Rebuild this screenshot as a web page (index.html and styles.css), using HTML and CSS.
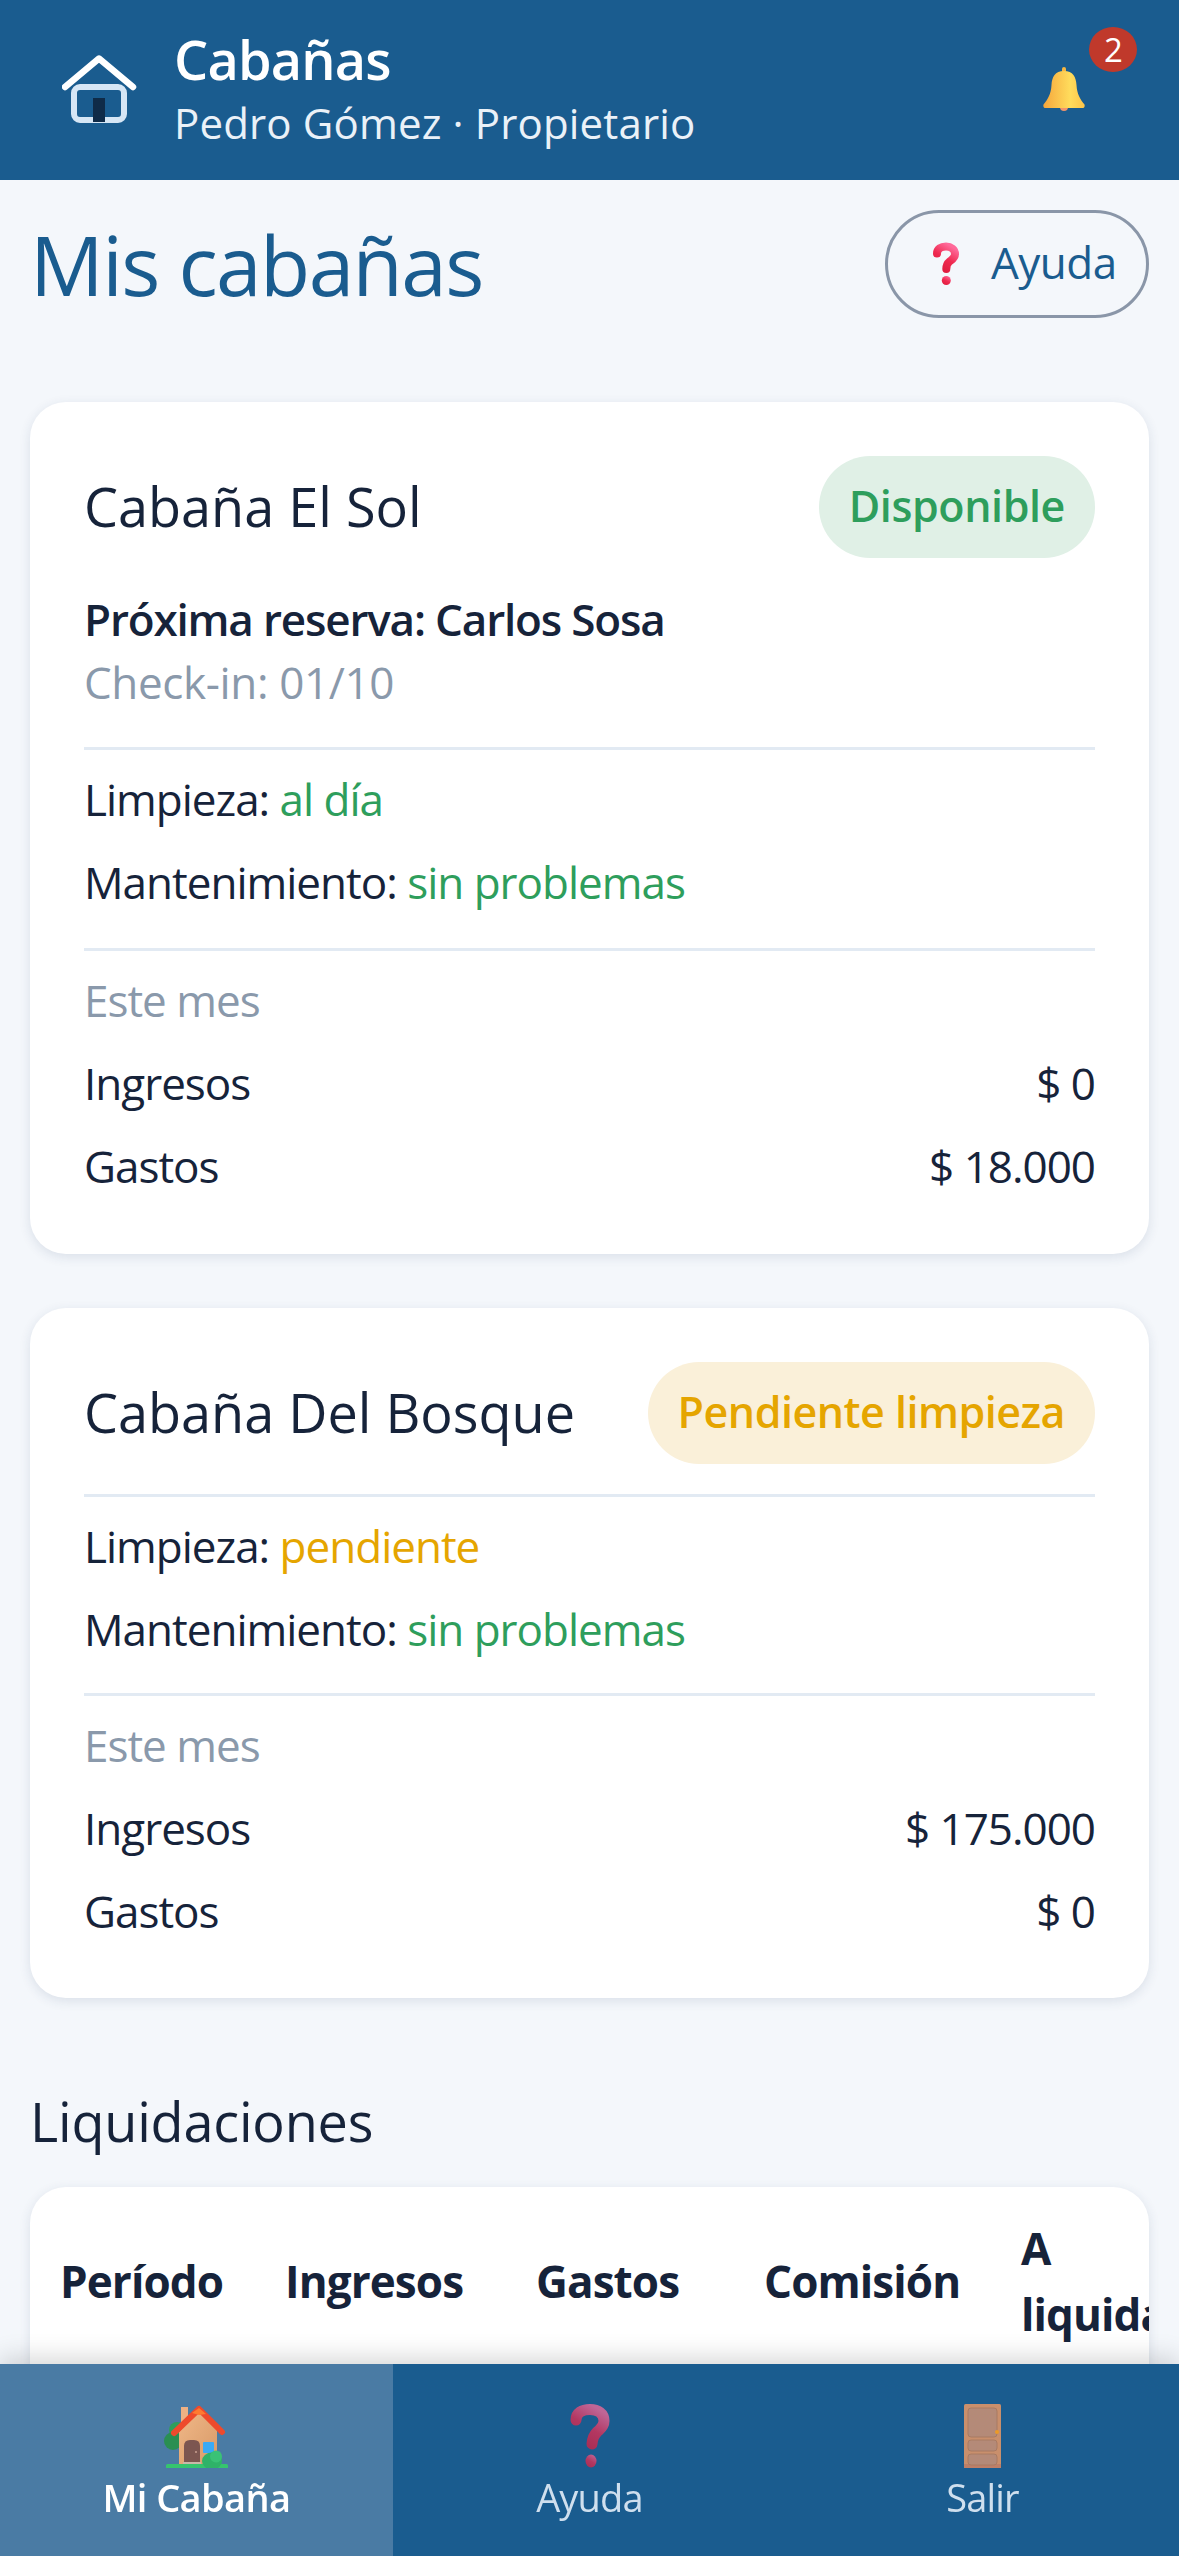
FILE: index.html
```html
<!DOCTYPE html>
<html lang="es">
<head>
<meta charset="utf-8">
<title>Cabañas</title>
<link rel="stylesheet" href="styles.css">
</head>
<body>
<svg class="defs" width="0" height="0" aria-hidden="true">
  <defs>
    <linearGradient id="q" x1="0.8" y1="0" x2="0.3" y2="1"><stop offset="0" stop-color="#ff6a9a"/><stop offset="0.55" stop-color="#ef2a50"/><stop offset="1" stop-color="#e01e40"/></linearGradient>
    <linearGradient id="b" x1="0" y1="0" x2="1" y2="0"><stop offset="0" stop-color="#f5a63c"/><stop offset="0.65" stop-color="#ffdc5c"/><stop offset="1" stop-color="#fcc44a"/></linearGradient>
    <linearGradient id="w" x1="0" y1="0" x2="1" y2="1"><stop offset="0" stop-color="#f0b888"/><stop offset="1" stop-color="#d89a68"/></linearGradient>
    <symbol id="question" viewBox="0 0 28 44">
      <path d="M5 11.5C5 7 9 4.500 14 4.500C19 4.500 23 7.500 23 12C23 16 20 17.500 17.500 19.500C15 21.500 14.300 23 14.300 27" fill="none" stroke="url(#q)" stroke-width="8" stroke-linecap="round" stroke-linejoin="round"/>
      <circle cx="14.300" cy="38.500" r="4.500" fill="url(#q)"/>
    </symbol>
  </defs>
</svg>

<header class="topbar">
  <div class="brand">
    <svg class="logo" viewBox="0 0 84 78" aria-hidden="true">
      <rect x="12" y="32" width="50" height="33" rx="6" fill="none" stroke="#d6e6f5" stroke-width="6"/>
      <rect x="31" y="43" width="12" height="24" fill="#0f2b48"/>
      <path d="M3 32L37 3.500L71 32" fill="none" stroke="#fff" stroke-width="6.500" stroke-linecap="round" stroke-linejoin="round"/>
    </svg>
    <div>
      <div class="brand-name">Cabañas</div>
      <div class="brand-sub">Pedro Gómez · Propietario</div>
    </div>
  </div>
  <div class="bell">
    <svg class="bell-icon" viewBox="0 0 42 44" aria-hidden="true">
      <circle cx="21" cy="40" r="4" fill="#f2946a"/>
      <rect x="19" y="0" width="4" height="6" rx="2" fill="#f5b642"/>
      <path d="M21 4C12 4 9 10 8.500 18C8 27 5 32 0.500 37.500C0 39 0.500 41 2 41H40C41.500 41 42 39 41.500 37.500C37 32 34 27 33.500 18C33 10 30 4 21 4Z" fill="url(#b)"/>
    </svg>
    <span class="bell-count">2</span>
  </div>
</header>

<main class="content">
  <div class="title-row">
    <h1 class="page-title">Mis cabañas</h1>
    <button class="help-btn"><svg class="help-icon" aria-hidden="true"><use href="#question"/></svg><span class="help-label">Ayuda</span></button>
  </div>

  <article class="card card-booking">
    <div class="card-head">
      <h2 class="card-title">Cabaña El Sol</h2>
      <span class="badge badge-ok">Disponible</span>
    </div>
    <div class="booking">
      <div class="strong">Próxima reserva: Carlos Sosa</div>
      <div class="muted">Check-in: 01/10</div>
    </div>
    <div class="block">
      <div>Limpieza: <span class="ok">al día</span></div>
      <div>Mantenimiento: <span class="ok">sin problemas</span></div>
    </div>
    <div class="block">
      <div class="muted">Este mes</div>
      <div class="row"><span>Ingresos</span><span>$ 0</span></div>
      <div class="row"><span>Gastos</span><span>$ 18.000</span></div>
    </div>
  </article>

  <article class="card">
    <div class="card-head">
      <h2 class="card-title">Cabaña Del Bosque</h2>
      <span class="badge badge-warn">Pendiente limpieza</span>
    </div>
    <div class="block block-first">
      <div>Limpieza: <span class="warn">pendiente</span></div>
      <div>Mantenimiento: <span class="ok">sin problemas</span></div>
    </div>
    <div class="block">
      <div class="muted">Este mes</div>
      <div class="row"><span>Ingresos</span><span>$ 175.000</span></div>
      <div class="row"><span>Gastos</span><span>$ 0</span></div>
    </div>
  </article>

  <h2 class="section-title">Liquidaciones</h2>
  <div class="table-card">
    <table class="table">
      <thead>
        <tr><th class="col-a">Período</th><th class="col-b">Ingresos</th><th class="col-c">Gastos</th><th class="col-d">Comisión</th><th class="col-e">A liquidar</th></tr>
      </thead>
    </table>
  </div>
</main>

<nav class="tabs">
  <a class="tab tab-active">
    <svg class="tab-icon" viewBox="0 0 70 64" aria-hidden="true">
      <circle cx="15" cy="26" r="8" fill="#2e9e5c"/>
      <circle cx="11" cy="37" r="9" fill="#2a8f52"/>
      <rect x="19" y="3" width="7" height="22" fill="#eeb184"/>
      <path d="M17 28L37 6L55 26V60H17Z" fill="url(#w)"/>
      <path d="M12 29L37 5L60 28" fill="none" stroke="#ee4a2c" stroke-width="6" stroke-linecap="round" stroke-linejoin="round"/>
      <path d="M30 9L37 4L44 10L37 11Z" fill="#ff7a30"/>
      <path d="M22 60V42Q22 36 28 36H32Q38 36 38 42V60Z" fill="#7c5650"/>
      <circle cx="34" cy="48" r="1" fill="#c9a090"/>
      <rect x="41" y="38" width="11" height="11" rx="1" fill="#3aaaf5"/>
      <rect x="21" y="58" width="18" height="2.500" fill="#c8b8a8"/>
      <rect x="4" y="60" width="62" height="5" rx="1.500" fill="#36c46e"/>
      <ellipse cx="50" cy="57" rx="10" ry="8.500" fill="#2fb268"/>
      <circle cx="54" cy="52.500" r="6" fill="#3ac276"/>
    </svg>
    <span>Mi Cabaña</span>
  </a>
  <a class="tab">
    <svg class="tab-icon tab-icon-dim" viewBox="0 0 40 64" aria-hidden="true">
      <path d="M6 16C6 9 12 5.500 20 5.500C28 5.500 34 9.500 34 17C34 23 30 25 27 28C24 31 22.500 33.500 22 40" fill="none" stroke="url(#q)" stroke-width="11" stroke-linecap="round" stroke-linejoin="round"/>
      <ellipse cx="21" cy="57" rx="5.500" ry="6.500" fill="url(#q)"/>
    </svg>
    <span>Ayuda</span>
  </a>
  <a class="tab">
    <svg class="tab-icon" viewBox="0 0 37 64" aria-hidden="true">
      <rect x="0" y="0" width="37" height="64" rx="1.500" fill="#c98f6c"/>
      <rect x="0" y="60" width="37" height="4" fill="#bd7f68"/>
      <rect x="4" y="4" width="29" height="29" rx="3" fill="#b48a78" stroke="#a87a62"/>
      <rect x="4" y="36" width="29" height="11" rx="3" fill="#b48a78" stroke="#a87a62"/>
      <rect x="4" y="50" width="29" height="11" rx="3" fill="#b48a78" stroke="#a87a62"/>
      <circle cx="33" cy="28" r="2" fill="#eb9a28"/>
    </svg>
    <span>Salir</span>
  </a>
</nav>
</body>
</html>
```
FILE: styles.css
```css
* { box-sizing: border-box; }
html, body { margin: 0; height: 2556px; overflow: hidden; }
body {
  background: #f4f7fb;
  color: #16233a;
  font-family: "Open Sans", "Noto Sans", sans-serif;
  font-size: 44px;
  line-height: 63px;
  letter-spacing: -1px;
}
.defs { position: absolute; }

.topbar {
  height: 180px;
  background: #1a5c8f;
  display: flex;
  justify-content: space-between;
  padding: 0 42px 0 62px;
  color: #fff;
}
.brand { display: flex; align-items: center; gap: 28px; }
.logo { width: 84px; height: 78px; margin-top: 8px; }
.brand-name { font-size: 54px; line-height: 64px; font-weight: 600; margin-top: -2px; letter-spacing: -0.8px; }
.brand-sub { font-size: 42px; line-height: 58px; color: #eaf1f8; margin-top: 3px; letter-spacing: 0.15px; }
.bell { position: relative; width: 94px; height: 180px; }
.bell-icon { position: absolute; left: 0; top: 67px; width: 42px; height: 44px; }
.bell-count {
  position: absolute;
  left: 46px;
  top: 27px;
  width: 48px;
  height: 45px;
  border-radius: 50%;
  background: #c0392b;
  font-size: 33px;
  line-height: 45px;
  text-align: center;
}

.content { padding: 30px 30px 0; }
.title-row { display: flex; justify-content: space-between; align-items: center; height: 108px; margin-bottom: 84px; }
.page-title { margin: 0; font-size: 82px; line-height: 108px; font-weight: 400; color: #1a5c8f; letter-spacing: -1.6px; }
.help-btn {
  display: flex;
  align-items: center;
  gap: 31px;
  height: 108px;
  width: 264px;
  padding: 0 28px 0 44px;
  border: 3px solid #8a96a8;
  border-radius: 54px;
  background: none;
  color: #1a5c8f;
  font: inherit;
  letter-spacing: -0.5px;
}
.help-icon { width: 28px; height: 44px; flex: none; }
.help-label { margin-top: -4px; }

.card {
  background: #fff;
  border-radius: 36px;
  box-shadow: 0 3px 12px rgba(30, 60, 100, 0.12);
  padding: 54px;
  margin-bottom: 54px;
}
.card-head { display: flex; justify-content: space-between; align-items: center; height: 102px; }
.card-title { margin: -2px 0 0; font-size: 54px; line-height: 72px; font-weight: 400; letter-spacing: 0; }
.badge { height: 102px; padding: 0 30px; border-radius: 51px; font-size: 43px; line-height: 100px; font-weight: 600; letter-spacing: -0.4px; }
.badge-ok { background: #e0f0e6; color: #2e9e5c; }
.badge-warn { background: #faf0d9; color: #e5a500; letter-spacing: -0.5px; }
.booking { margin-top: 30px; padding-bottom: 33px; }
.strong { font-weight: 600; letter-spacing: -1.17px; }
.booking .muted { letter-spacing: -0.37px; }
.muted { color: #8a99ab; }
.ok { color: #2e9e5c; }
.warn { color: #e5a500; }
.block {
  display: flex;
  flex-direction: column;
  gap: 20px;
  border-top: 3px solid #e2eaf3;
  padding: 18px 0 32px;
}
.card-booking .block { padding-bottom: 34px; }
.block:last-child { padding-bottom: 1px; }
.card-booking .block:last-child { padding-bottom: 2px; }
.block-first { margin-top: 30px; }
.row { display: flex; justify-content: space-between; }

.section-title { margin: 87px 0 30px; font-size: 54px; line-height: 72px; font-weight: 400; letter-spacing: -0.2px; }
.table-card { background: #fff; border-radius: 36px; box-shadow: 0 3px 12px rgba(30, 60, 100, 0.12); height: 300px; overflow: hidden; }
.table { border-collapse: collapse; table-layout: fixed; width: 1202px; }
.table th { padding: 28px 30px; font-weight: 700; font-size: 44px; line-height: 66px; text-align: left; letter-spacing: -0.9px; }
.col-a { width: 225px; }
.col-b { width: 251px; }
.col-c { width: 228px; }
.col-d { width: 257px; }
.col-e { width: 241px; }

.tabs {
  position: fixed;
  left: 0;
  right: 0;
  bottom: 0;
  height: 192px;
  background: #1a5c8f;
  display: flex;
  box-shadow: 0 -6px 24px rgba(0, 0, 0, 0.16);
}
.tab {
  flex: 1;
  display: flex;
  flex-direction: column;
  align-items: center;
  justify-content: flex-end;
  padding-bottom: 33px;
  color: #cfdfee;
  font-size: 38px;
  line-height: 52px;
  letter-spacing: -0.8px;
}
.tab-active { background: #4a7ba4; color: #fff; font-weight: 600; letter-spacing: -0.6px; }
.tab-icon { height: 64px; margin-bottom: 3px; }
.tab-icon-dim { opacity: 0.72; }
```
